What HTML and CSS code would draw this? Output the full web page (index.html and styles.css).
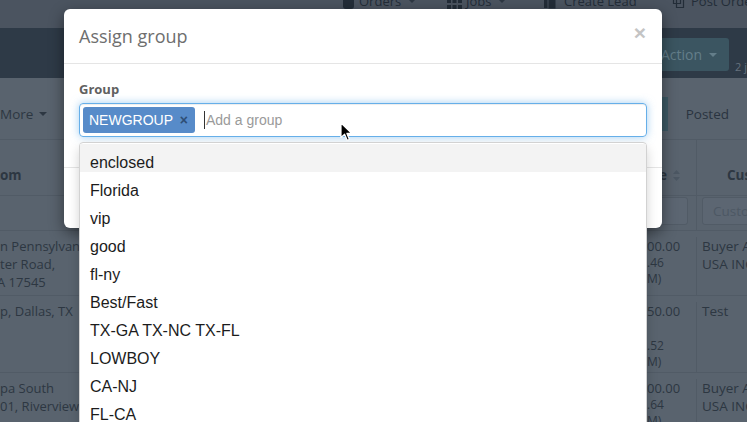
FILE: index.html
```html
<!DOCTYPE html>
<html>
<head>
<meta charset="utf-8">
<link rel="stylesheet" href="styles.css">
</head>
<body>
<div class="page">
  <nav class="topnav">
    <div class="nav-item nav-orders">
      <svg class="nav-icon" width="13" height="16" viewBox="0 0 13 16"><rect x="1" y="2" width="11" height="14" rx="3" fill="#232d38"/></svg>
      <span>Orders</span><span class="caret"></span>
    </div>
    <div class="nav-item nav-jobs">
      <svg class="nav-icon" width="15" height="16" viewBox="0 0 15 16"><g fill="#232d38"><rect x="0" y="0" width="4" height="4"/><rect x="5.5" y="0" width="4" height="4"/><rect x="11" y="0" width="4" height="4"/><rect x="0" y="6" width="4" height="4"/><rect x="5.5" y="6" width="4" height="4"/><rect x="11" y="6" width="4" height="4"/><rect x="0" y="12" width="4" height="4"/><rect x="5.5" y="12" width="4" height="4"/><rect x="11" y="12" width="4" height="4"/></g></svg>
      <span>Jobs</span><span class="caret"></span>
    </div>
    <div class="nav-item nav-lead">
      <svg class="nav-icon" width="14" height="16" viewBox="0 0 14 16"><path d="M1 2h7v13H1z" fill="#232d38"/><path d="M5 5h8v11H5z" fill="#232d38" stroke="#4b5460" stroke-width="1"/></svg>
      <span>Create Lead</span>
    </div>
    <div class="nav-item nav-post">
      <svg class="nav-icon" width="13" height="16" viewBox="0 0 13 16"><path d="M1.5 1.5h7v9h-7z M4.5 5.5h7v9h-7z" fill="none" stroke="#232d38" stroke-width="1.2"/></svg>
      <span>Post Order</span>
    </div>
  </nav>

  <div class="band">
    <div class="action-btn">Action <span class="caret caret-light"></span></div>
    <span class="count">2 jobs</span>
  </div>

  <div class="toolbar">
    <span class="more">More <span class="caret"></span></span>
    <div class="btn-group">
      <span class="tbtn tbtn-active">Active</span>
      <span class="tbtn">Posted</span>
    </div>
  </div>

  <div class="grid">
    <div class="row row-head">
      <div class="c1"><b>om</b></div>
      <div class="c2 head-price"><span class="hp-text">Price</span>
        <svg class="sort-icon" width="7" height="11" viewBox="0 0 7 11"><path d="M3.5 0L7 4H0z M3.5 11L0 7h7z" fill="#4c5763"/></svg>
      </div>
      <div class="c3 head-cust"><b>Customer</b></div>
    </div>
    <div class="row row-filter">
      <div class="c1"></div>
      <div class="c2"><div class="finput"></div></div>
      <div class="c3"><div class="finput finput-wide">Customer</div></div>
    </div>
    <div class="row row-1">
      <div class="c1"><div>n Pennsylvania Avenue</div><div>ter Road,</div><div class="shift">A 17545</div></div>
      <div class="c2"><div class="price">00.00</div><div class="date">.46</div><div class="date">M)</div></div>
      <div class="c3"><div>Buyer Auto</div><div>USA INC.</div></div>
    </div>
    <div class="row row-2">
      <div class="c1"><div>p, Dallas, TX</div></div>
      <div class="c2"><div class="price">50.00</div><div class="price">&nbsp;</div><div class="date">.52</div><div class="date">M)</div></div>
      <div class="c3"><div>Test</div></div>
    </div>
    <div class="row row-3">
      <div class="c1"><div>pa South</div><div>01, Riverview, FL</div></div>
      <div class="c2"><div class="price">00.00</div><div class="date">.64</div><div class="date">M)</div></div>
      <div class="c3"><div>Buyer Auto</div><div>USA INC.</div></div>
    </div>
  </div>
</div>

<div class="modal">
  <div class="modal-header">
    <h4 class="modal-title">Assign group</h4>
    <span class="close">×</span>
  </div>
  <div class="modal-body">
    <label class="label">Group</label>
    <div class="tag-input">
      <span class="tag"><span>NEWGROUP</span><span class="tag-x">×</span></span>
      <span class="placeholder">Add a group</span>
    </div>
    <ul class="dropdown">
      <li class="active">enclosed</li>
      <li>Florida</li>
      <li>vip</li>
      <li>good</li>
      <li>fl-ny</li>
      <li>Best/Fast</li>
      <li>TX-GA TX-NC TX-FL</li>
      <li>LOWBOY</li>
      <li>CA-NJ</li>
      <li>FL-CA</li>
    </ul>
  </div>
  <div class="modal-footer"></div>
</div>

<svg class="cursor" width="13" height="20" viewBox="0 0 13 20"><path d="M1 1L1 15.5L4.6 12.2L7.2 18.3L9.4 17.4L6.9 11.4L11.6 11.4Z" fill="#000" stroke="#fff" stroke-width="1.2" stroke-linejoin="round"/></svg>
</body>
</html>
```

FILE: styles.css
```css
html, body {
  margin: 0;
  padding: 0;
}
body {
  width: 747px;
  height: 422px;
  overflow: hidden;
  position: relative;
  background: #59636e;
  font-family: "Open Sans", "Liberation Sans", sans-serif;
  color: #2d3742;
}
.page {
  width: 747px;
}

/* top nav */
.topnav {
  height: 28px;
  background: #4b5460;
  display: flex;
  padding-left: 342px;
  box-sizing: border-box;
  overflow: hidden;
}
.nav-item {
  display: flex;
  align-items: center;
  gap: 4px;
  height: 20px;
  margin-top: -9px;
  font-size: 13px;
  color: #232d38;
  flex-shrink: 0;
}
.nav-orders { width: 105px; }
.nav-jobs { width: 96px; }
.nav-lead { width: 129px; gap: 7px; }
.nav-post { gap: 6px; }
.nav-icon { display: block; }
.caret {
  display: inline-block;
  width: 0;
  height: 0;
  border-top: 4px solid #2d3742;
  border-left: 4px solid transparent;
  border-right: 4px solid transparent;
  margin-left: 3px;
}
.caret-light { border-top-color: #647e8a; }

/* dark band */
.band {
  height: 50px;
  background: #2e3a47;
  display: flex;
  justify-content: flex-end;
  align-items: flex-start;
  padding-top: 10px;
  box-sizing: border-box;
  overflow: hidden;
}
.action-btn {
  height: 33px;
  width: 76px;
  box-sizing: border-box;
  background: #3b5561;
  border-radius: 3px;
  color: #647e8a;
  font-size: 14px;
  display: flex;
  align-items: center;
  justify-content: flex-end;
  gap: 4px;
  padding-right: 12px;
}
.count {
  flex-shrink: 0;
  width: 12px;
  overflow: hidden;
  white-space: nowrap;
  margin-left: 6px;
  margin-top: 22px;
  font-size: 11px;
  line-height: 14px;
  color: #66717d;
}

/* toolbar */
.toolbar {
  height: 62px;
  box-sizing: border-box;
  padding-top: 19px;
  display: flex;
  align-items: flex-start;
  justify-content: space-between;
  border-bottom: 1px solid #515b66;
}
.more {
  height: 34px;
  display: flex;
  align-items: center;
  gap: 3px;
  font-size: 13.5px;
  color: #2d3742;
}
.btn-group {
  display: flex;
  height: 34px;
}
.tbtn {
  display: flex;
  align-items: center;
  font-size: 13.5px;
  color: #2a3440;
  padding: 0 18px;
}
.tbtn-active {
  width: 67px;
  box-sizing: border-box;
  background: #3d5a66;
  border-radius: 4px 0 0 4px;
  color: #3d5a66;
}

/* table */
.grid {
  font-size: 13px;
  line-height: 18px;
  color: #2d3742;
}
.row {
  display: grid;
  grid-template-columns: 647px 49px 1fr;
  border-bottom: 1px solid #515b66;
  box-sizing: border-box;
}
.c1, .c2, .c3 {
  overflow: hidden;
  white-space: nowrap;
}
.c3 {
  border-left: 1px solid #515b66;
  padding-left: 5px;
  font-size: 13.5px;
}
.row-head {
  height: 56px;
  padding-top: 26px;
  font-size: 13.5px;
}
.row-head .c3 { margin-top: -26px; padding-top: 26px; }
.head-price {
  display: flex;
  justify-content: flex-end;
  align-items: center;
  gap: 6px;
  padding-right: 16px;
  overflow: visible;
  height: 18px;
  font-weight: 700;
}
.hp-text, .sort-icon { flex-shrink: 0; }
.head-cust { padding-left: 30px; }
.row-filter {
  height: 35px;
}
.row-filter .c2, .row-filter .c3 { padding-top: 1px; }
.finput {
  height: 28px;
  width: 41px;
  box-sizing: border-box;
  border: 1px solid #515b66;
  background: #5c6672;
  border-radius: 3px;
}
.finput-wide {
  width: 80px;
  padding-left: 10px;
  line-height: 26px;
  color: #4d5864;
  font-size: 13.5px;
}
.row-1 { height: 65px; padding-top: 6px; }
.row-2 { height: 77px; padding-top: 6px; }
.row-3 { height: 60px; padding-top: 6px; }
.shift { margin-left: -3px; }
.price { font-size: 13px; line-height: 18px; }
.date { font-size: 12px; line-height: 16px; }

/* modal */
.modal {
  position: absolute;
  left: 64px;
  top: 9px;
  width: 598px;
  height: 219px;
  background: #fff;
  border-radius: 6px;
  box-shadow: 0 5px 15px rgba(0, 0, 0, 0.45);
  display: flex;
  flex-direction: column;
  font-family: "Open Sans", "Liberation Sans", sans-serif;
}
.modal-header {
  padding: 15px 16px 15px 15px;
  border-bottom: 1px solid #e5e5e5;
  display: flex;
  justify-content: space-between;
  align-items: center;
}
.modal-title {
  margin: 0;
  font-size: 18px;
  line-height: 24px;
  font-weight: 400;
  color: #6e6e6e;
}
.close {
  font-family: "Liberation Sans", sans-serif;
  font-size: 21px;
  font-weight: 700;
  line-height: 1;
  color: #c4c4c4;
  margin-top: -8px;
}
.modal-body {
  position: relative;
  padding: 15px 15px 30px;
}
.label {
  display: block;
  font-size: 13px;
  line-height: 20px;
  font-weight: 700;
  color: #606060;
  margin-bottom: 4px;
}
.tag-input {
  height: 34px;
  box-sizing: border-box;
  border: 1px solid #66afe9;
  border-radius: 4px;
  box-shadow: inset 0 1px 1px rgba(0, 0, 0, 0.075), 0 0 8px rgba(102, 175, 233, 0.6);
  padding: 3px;
  display: flex;
  align-items: center;
  gap: 9px;
  font-family: "Liberation Sans", Arial, sans-serif;
}
.tag {
  height: 26px;
  width: 112px;
  box-sizing: border-box;
  background: #578bc9;
  color: #fff;
  border-radius: 3px;
  padding: 0 7px 0 6px;
  display: flex;
  align-items: center;
  justify-content: space-between;
  font-size: 14px;
}
.tag-x {
  font-size: 14px;
  font-weight: 700;
  color: #2e4e76;
}
.placeholder {
  font-size: 14px;
  line-height: 18px;
  color: #9a9a9a;
  border-left: 1px solid #333;
  padding-left: 1px;
}
.modal-footer {
  flex: 1;
  border-top: 1px solid #e5e5e5;
}

/* dropdown menu */
.dropdown {
  position: absolute;
  left: 15px;
  top: 78px;
  width: 568px;
  height: 300px;
  box-sizing: border-box;
  margin: 0;
  padding: 1px 0 0;
  list-style: none;
  background: #fff;
  border: 1px solid #d2d2d2;
  border-radius: 4px 4px 0 0;
  box-shadow: 0 6px 12px rgba(0, 0, 0, 0.175);
  font-family: "Liberation Sans", Arial, sans-serif;
  font-size: 16px;
  color: #1c1c1c;
  z-index: 2;
}
.dropdown li {
  height: 28px;
  box-sizing: border-box;
  padding: 10px 10px 0;
  line-height: 18px;
}
.dropdown li.active {
  background: #f3f3f3;
}

.cursor {
  position: absolute;
  left: 340px;
  top: 122px;
  z-index: 5;
}
```
